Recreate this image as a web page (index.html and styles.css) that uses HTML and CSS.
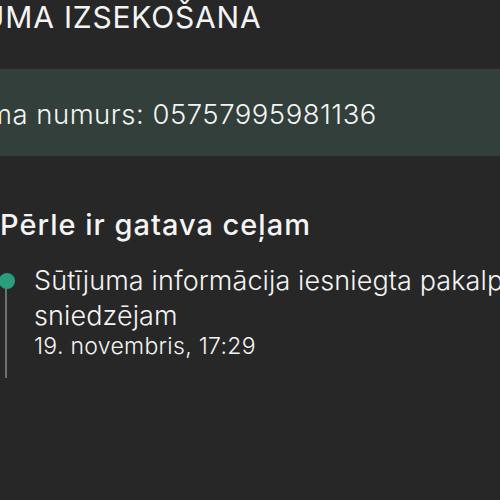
FILE: index.html
```html
<!DOCTYPE html>
<html lang="lv">
<head>
  <meta charset="UTF-8" />
  <meta name="viewport" content="width=device-width, initial-scale=1.0" />
  <title>Sūtījuma izsekošana</title>
  <link rel="stylesheet" href="styles.css">
</head>
<body>
  <div class="screen">
    <h1 class="page-title">SŪTĪJUMA IZSEKOŠANA</h1>

    <div class="tracking-band">
      <span class="tracking-number">Sūtījuma numurs: 05757995981136</span>
    </div>

    <section class="status">
      <h2 class="status-title">Pērle ir gatava ceļam</h2>
      <ol class="timeline">
        <li class="event">
          <span class="event-dot"></span>
          <div class="event-body">
            <p class="event-text">Sūtījuma informācija iesniegta pakalpojumu sniedzējam</p>
            <p class="event-date">19. novembris, 17:29</p>
          </div>
        </li>
      </ol>
    </section>
  </div>
</body>
</html>
```

FILE: styles.css
```css
:root {
  --bg: #272727;
  --band: #323f3a;
  --text: #f4f4f4;
  --accent: #2a9d7f;
  --rail: #6f6f6f;
}

html, body { margin: 0; height: 100%; }
body {
  background: var(--bg);
  color: var(--text);
  font-family: Inter, "Noto Sans", sans-serif;
  overflow: hidden;
}

.screen { width: 800px; }

.page-title {
  margin: -2px 0 0 -108px;
  font-size: 30px;
  font-weight: 400;
  line-height: 38px;
  letter-spacing: 0.8px;
}

.tracking-band {
  margin-top: 33px;
  height: 87px;
  box-sizing: border-box;
  padding-top: 28px;
  background: var(--band);
}
.tracking-number {
  display: block;
  margin-left: -87px;
  font-size: 27.5px;
  font-weight: 300;
  line-height: 35px;
  letter-spacing: 0.5px;
}

.status { padding-top: 51px; }
.status-title {
  margin: 0;
  font-size: 29px;
  font-weight: 500;
  line-height: 36px;
  letter-spacing: 1px;
}

.timeline {
  list-style: none;
  margin: 17px 0 0;
  padding: 0;
}
.event {
  position: relative;
  display: flex;
  gap: 19px;
}
.event::before {
  content: "";
  position: absolute;
  left: 5px;
  top: 20px;
  width: 2px;
  height: 98px;
  background: var(--rail);
}
.event-dot {
  flex: none;
  width: 16px;
  height: 16px;
  margin-top: 13px;
  margin-left: -1px;
  border-radius: 50%;
  background: var(--accent);
  position: relative;
}
.event-body {
  width: 600px;
  padding-top: 3px;
}
.event-text {
  margin: 0;
  font-size: 27px;
  font-weight: 300;
  line-height: 35px;
  letter-spacing: 0.1px;
}
.event-date {
  margin: -1px 0 0;
  font-size: 23px;
  font-weight: 300;
  line-height: 28px;
  letter-spacing: 0.3px;
}
```
